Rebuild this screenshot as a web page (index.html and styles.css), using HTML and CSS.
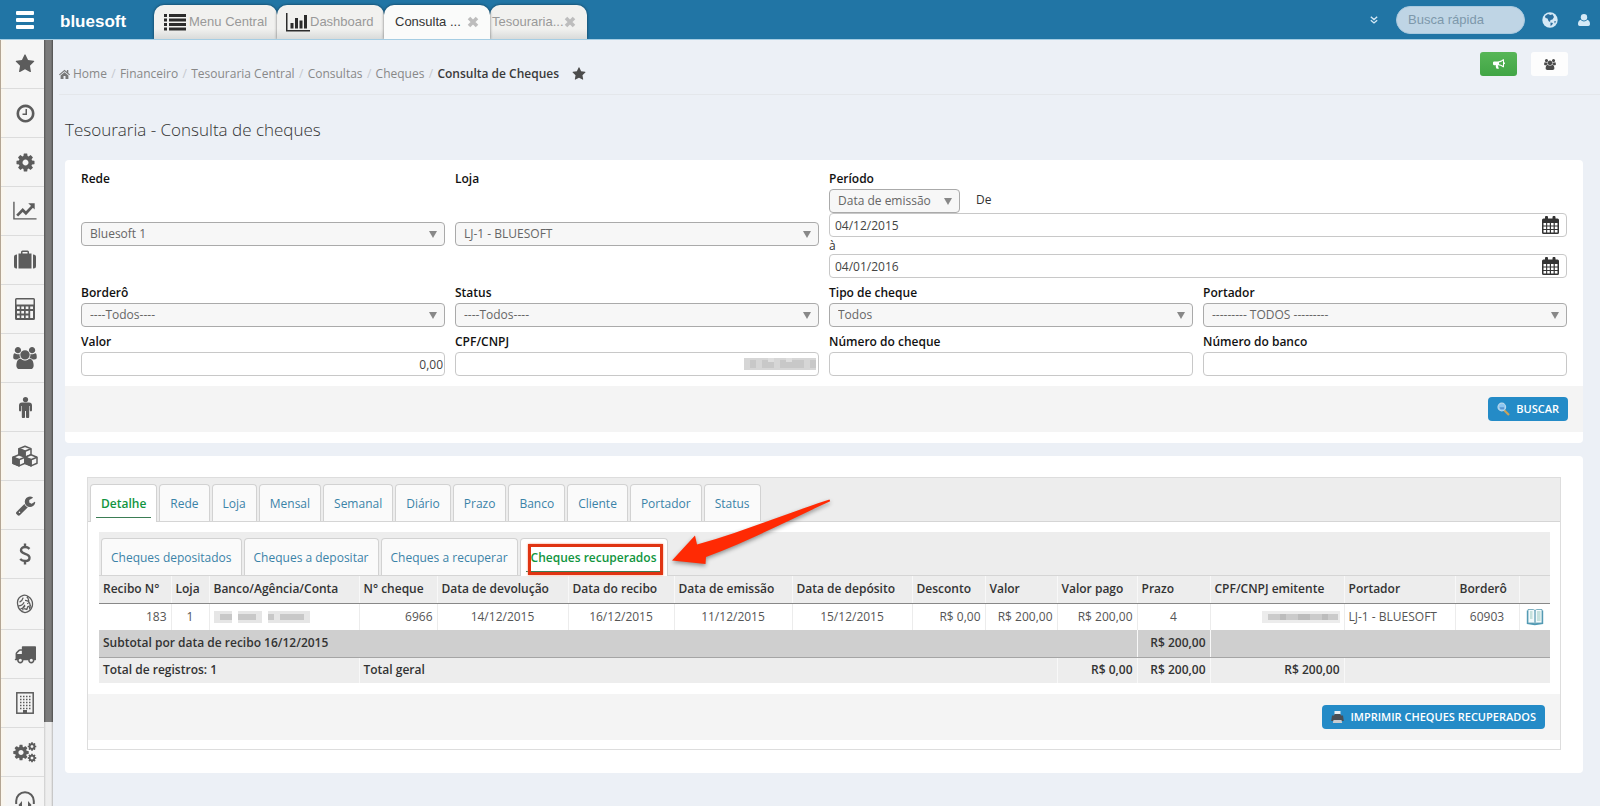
FILE: index.html
```html
<!DOCTYPE html>
<html lang="pt-BR">
<head>
<meta charset="utf-8">
<title>Tesouraria - Consulta de cheques</title>
<link rel="stylesheet" href="styles.css">
</head>
<body>
<svg class="sprite" aria-hidden="true">
  <symbol id="i-star" viewBox="0 0 1792 1792"><path d="M1728 647q0 22-26 48l-363 354 86 500q1 7 1 20 0 21-10.500 35.500t-30.500 14.500q-19 0-40-12l-449-236-449 236q-22 12-40 12-21 0-31.500-14.500t-10.500-35.500q0-6 2-20l86-500-364-354q-25-27-25-48 0-37 56-46l502-73 225-455q19-41 49-41t49 41l225 455 502 73q56 9 56 46z"/></symbol>
  <symbol id="i-clock" viewBox="0 0 1792 1792"><path d="M1024 544v448q0 14-9 23t-23 9h-320q-14 0-23-9t-9-23v-64q0-14 9-23t23-9h224v-352q0-14 9-23t23-9h64q14 0 23 9t9 23zm416 352q0-148-73-273t-198-198-273-73-273 73-198 198-73 273 73 273 198 198 273 73 273-73 198-198 73-273zm224 0q0 209-103 385.500t-279.500 279.500-385.500 103-385.500-103-279.500-279.500-103-385.500 103-385.500 279.500-279.500 385.500-103 385.500 103 279.500 279.500 103 385.500z"/></symbol>
  <symbol id="i-cog" viewBox="0 0 1792 1792"><path d="M1152 896q0-106-75-181t-181-75-181 75-75 181 75 181 181 75 181-75 75-181zm512-109v222q0 12-8 23t-20 13l-185 28q-19 54-39 91 35 50 107 138 10 12 10 25t-9 23q-27 37-99 108t-94 71q-12 0-26-9l-138-108q-44 23-91 38-16 136-29 186-7 28-36 28h-222q-14 0-24.500-8.500t-11.500-21.500l-28-184q-49-16-90-37l-141 107q-10 9-25 9-14 0-25-11-126-114-165-168-7-10-7-23 0-12 8-23 15-21 51-66.500t54-70.500q-27-50-41-99l-183-27q-13-2-21-12.500t-8-23.500v-222q0-12 8-23t19-13l186-28q14-46 39-92-40-57-107-138-10-12-10-24 0-10 9-23 26-36 98.500-107.500t94.500-71.500q13 0 26 10l138 107q44-23 91-38 16-136 29-186 7-28 36-28h222q14 0 24.500 8.500t11.500 21.500l28 184q49 16 90 37l142-107q9-9 24-9 13 0 25 10 129 119 165 170 7 8 7 22 0 12-8 23-15 21-51 66.500t-54 70.500q26 50 41 98l183 28q13 2 21 12.500t8 23.500z"/></symbol>
  <symbol id="i-chart" viewBox="0 0 26 20"><path d="M1 0v18.500h24.500" fill="none" stroke="currentColor" stroke-width="1.500"/><path d="M4.500 15l6-6 3.500 3.500 7-7.500" fill="none" stroke="currentColor" stroke-width="3"/><path d="M16.500 1.500h7v7z"/></symbol>
  <symbol id="i-case" viewBox="0 0 22 20"><path d="M2.500 4.500H3v14h-.5a2.500 2.500 0 0 1-2.500-2.500V7a2.500 2.500 0 0 1 2.500-2.500zM19 4.500h.5A2.500 2.500 0 0 1 22 7v9a2.500 2.500 0 0 1-2.500 2.500H19zM4.500 3.500H7V2a1.500 1.500 0 0 1 1.500-1.500h5A1.500 1.500 0 0 1 15 2v1.500h2.500v15h-13zM8.500 2v1.500h5V2z"/></symbol>
  <symbol id="i-calc" viewBox="0 0 20 22"><path fill-rule="evenodd" d="M1.500 0h17A1.500 1.500 0 0 1 20 1.500v19a1.500 1.500 0 0 1-1.500 1.500h-17A1.500 1.500 0 0 1 0 20.500v-19A1.500 1.500 0 0 1 1.500 0zM1.500 1.500v5h17v-5zM2 8.500v2.500h2.700V8.500zM6.300 8.500v2.500H9V8.500zM10.700 8.500v2.500h2.700V8.500zM15.200 8.500v2.500H18V8.500zM2 13v2.500h2.700V13zM6.300 13v2.500H9V13zM10.700 13v2.500h2.700V13zM15.200 13v7H18v-7zM2 17.500V20h2.700v-2.500zM6.300 17.500V20H9v-2.500zM10.700 17.500V20h2.700v-2.500z"/></symbol>
  <symbol id="i-users" viewBox="0 0 1920 1792"><path d="M593 896q-162 5-265 128h-134q-82 0-138-40.500t-56-118.500q0-353 124-353 6 0 43.500 21t97.500 42.500 119 21.500q67 0 133-23-5 37-5 66 0 139 81 256zm1071 637q0 120-73 189.500t-194 69.500h-874q-121 0-194-69.500t-73-189.500q0-53 3.500-103.500t14-109 26.500-108.500 43-97.500 62-81 85.500-53.500 111.500-20q10 0 43 21.500t73 48 107 48 135 21.500 135-21.500 107-48 73-48 43-21.500q61 0 111.500 20t85.500 53.500 62 81 43 97.500 26.500 108.500 14 109 3.500 103.500zm-1024-1277q0 106-75 181t-181 75-181-75-75-181 75-181 181-75 181 75 75 181zm704 384q0 159-112.500 271.500t-271.500 112.500-271.500-112.500-112.500-271.500 112.500-271.500 271.500-112.500 271.500 112.500 112.500 271.500zm576 225q0 78-56 118.500t-138 40.500h-134q-103-123-265-128 81-117 81-256 0-29-5-66 66 23 133 23 59 0 119-21.500t97.500-42.500 43.500-21q124 0 124 353zm-128-609q0 106-75 181t-181 75-181-75-75-181 75-181 181-75 181 75 75 181z"/></symbol>
  <symbol id="i-male" viewBox="0 0 14 21"><circle cx="7" cy="2.600" r="2.600"/><path d="M3.500 5.500h7A3 3 0 0 1 13.500 8.500v4.800a1.100 1.100 0 0 1-2.200 0V9h-.6v10.700a1.400 1.400 0 0 1-3.200 0V14h-1v5.700a1.400 1.400 0 0 1-3.200 0V9h-.6v4.300a1.100 1.100 0 0 1-2.200 0V8.500a3 3 0 0 1 3-3z"/></symbol>
  <symbol id="i-cubes" viewBox="0 0 26 21"><g id="cube" fill="#f5f5f5" stroke="currentColor" stroke-width="1.500" stroke-linejoin="round"><path d="M7 3.200l6-2.400 6 2.400v6l-6 2.700-6-2.700z"/><path d="M7 3.200l6 2.600 6-2.600M13 5.800v6"/><path d="M7 3.200l6 2.600v6.100l-6-2.700z" fill="currentColor"/></g><use href="#cube" x="-6" y="8.500"/><use href="#cube" x="6" y="8.500"/></symbol>
  <symbol id="i-wrench" viewBox="0 0 1792 1792"><path d="M448 1472q0-26-19-45t-45-19-45 19-19 45 19 45 45 19 45-19 19-45zm644-420l-682 682q-37 37-90 37-52 0-91-37l-106-108q-38-36-38-90 0-53 38-91l681-681q39 98 114.500 173.500t173.500 114.500zm634-435q0 39-23 106-47 134-164.500 217.500t-258.500 83.500q-185 0-316.500-131.500t-131.500-316.500 131.500-316.500 316.500-131.500q58 0 121.500 16.500t107.500 46.500q16 11 16 28t-16 28l-293 169v224l193 107q5-3 79-48.500t135.500-81 70.500-35.500q15 0 23.500 10t8.500 25z"/></symbol>
  <symbol id="i-dollar" viewBox="0 0 12 22"><path d="M10.500 5.800C9.300 4.600 7.800 4 6 4 3.700 4 2 5.300 2 7.200 2 11.800 10.500 9.800 10.500 14.700 10.500 16.800 8.700 18 6.200 18 4.200 18 2.400 17.300 1.200 16M6 .5V4M6 18v3.500" fill="none" stroke="currentColor" stroke-width="2.400"/></symbol>
  <symbol id="i-lion" viewBox="0 0 20 22"><path d="M8 1.500C3.500 3 1 7 2 12c.5 4 3.500 7.500 8 8.500 4-.5 7-3.500 8-7 .8-4-.5-8-4-10.500C12 1.500 10 1 8 1.500zM4 9c2-1 3.500-3 4-5M3 13c3 0 5-2 6-4M5 16c2 .5 4-1 5-3M12 3c2 2 2.500 4 2 6M10 7c2 0 4 1 5 3l1 3-3 1-1 3-3-1M8 18c-1-2 0-4 2-6" fill="none" stroke="currentColor" stroke-width="1.400"/><path d="M12 9.500l2.500 1-2 .8zM14 14.500l3-1-2 4z"/></symbol>
  <symbol id="i-truck" viewBox="0 0 1792 1792"><path d="M640 1408q0-52-38-90t-90-38-90 38-38 90 38 90 90 38 90-38 38-90zm-384-512h384v-256h-158q-13 0-22 9l-195 195q-9 9-9 22v30zm1280 512q0-52-38-90t-90-38-90 38-38 90 38 90 90 38 90-38 38-90zm256-1088v1024q0 15-4 26.500t-13.500 18.500-16.500 11.500-23.500 6-22.500 2-25.500 0-22.500-.5q0 106-75 181t-181 75-181-75-75-181h-384q0 106-75 181t-181 75-181-75-75-181h-64q-3 0-22.500.5t-25.500 0-22.500-2-23.500-6-16.500-11.500-13.500-18.500-4-26.500q0-26 19-45t45-19v-320q0-8-.5-35t0-38 2.500-34.500 6.500-37 14-30.500 22.500-30l198-198q19-19 50.500-32t58.500-13h160v-192q0-26 19-45t45-19h1024q26 0 45 19t19 45z"/></symbol>
  <symbol id="i-building" viewBox="0 0 18 22"><rect x=".8" y=".8" width="16.400" height="20.400" fill="none" stroke="currentColor" stroke-width="1.500"/><path d="M4 4.500h11M4 7.500h11M4 10.500h11M4 13.500h11M4 16.500h11" stroke="currentColor" stroke-width="1.500" stroke-dasharray="1.500 1.500"/><path d="M7 18h4v3.500H7z"/></symbol>
  <symbol id="i-cogs" viewBox="0 0 24 21"><use href="#i-cog" x="-1" y="2" width="18" height="18"/><use href="#i-cog" x="14" y="0" width="10" height="10"/><use href="#i-cog" x="14" y="11.500" width="10" height="10"/></symbol>
  <symbol id="i-head" viewBox="0 0 20 20"><path d="M1.200 13V10a8.800 8.800 0 0 1 17.600 0v3" fill="none" stroke="currentColor" stroke-width="2"/><path d="M3.500 14l3.500-4v9zM16.500 14L13 10v9z"/></symbol>
  <symbol id="i-cal" viewBox="0 0 17 18"><path fill-rule="evenodd" d="M1.500 2.500H3V1.300a1.300 1.300 0 0 1 3 0v1.200h4.500V1.300a1.300 1.300 0 0 1 3 0v1.200h2A1.500 1.500 0 0 1 17 4v12.500a1.500 1.500 0 0 1-1.500 1.500h-14A1.500 1.500 0 0 1 0 16.500V4a1.500 1.500 0 0 1 1.500-1.500zM1.500 7v2.500h2.600V7zM5.200 7v2.500h2.600V7zM9 7v2.500h2.600V7zM12.800 7v2.500h2.700V7zM1.500 10.500V13h2.600v-2.500zM5.200 10.500V13h2.600v-2.500zM9 10.500V13h2.600v-2.500zM12.800 10.500V13h2.700v-2.500zM1.500 14v2.500h2.600V14zM5.200 14v2.500h2.600V14zM9 14v2.500h2.600V14zM12.800 14v2.500h2.700V14z"/></symbol>
  <symbol id="i-x" viewBox="0 0 12 12"><path d="M2 2l8 8M10 2l-8 8" stroke="currentColor" stroke-width="3.600"/></symbol>
</svg>

<header class="topbar">
  <button class="burger" aria-label="Menu"><span></span><span></span><span></span></button>
  <a class="logo" href="#">bluesoft</a>
  <nav class="wtabs">
    <a class="wtab wtab-menu" href="#"><svg class="ic-list" viewBox="0 0 22 18"><path d="M0 1h3v3H0zM5 1h17v3H5zM0 5.500h3v3H0zM5 5.500h17v3H5zM0 10h3v3H0zM5 10h17v3H5zM0 14.500h3v3H0zM5 14.500h17v3H5z"/></svg>Menu Central</a>
    <a class="wtab wtab-dash" href="#"><svg class="ic-bars" viewBox="0 0 24 19"><path d="M0 0h1.500v17H24v1.500H0zM4.500 10h3v5.500h-3zM9 5h3v10.500H9zM13.500 7.500h3v8h-3zM18 2h3v13.500h-3z"/></svg>Dashboard</a>
    <a class="wtab wtab-on" href="#">Consulta ...<svg class="ic-x"><use href="#i-x"/></svg></a>
    <a class="wtab wtab-last" href="#">Tesouraria...<svg class="ic-x"><use href="#i-x"/></svg></a>
  </nav>
  <div class="tools">
    <svg class="ic-down" viewBox="0 0 8 8"><path d="M.8.8L4 3.600 7.200.8M.8 4.200L4 7l3.200-2.800" fill="none" stroke="currentColor" stroke-width="1.300"/></svg>
    <input class="search" type="text" placeholder="Busca rápida" aria-label="Busca rápida">
    <svg class="ic-globe" viewBox="0 0 16 16"><circle cx="8" cy="8" r="7.700"/><path d="M3 4l3-2 2.500 1 2-.8L12 5l-1.500 2.500L8.500 8 8 10 6.500 9 5.500 6.500 3.500 6zM8.500 10.500l2.500.5-1 2-1.500 1zM12 9.500l2-.5-1 2.500z" fill="#2b6f9f"/></svg>
    <svg class="ic-user" viewBox="0 0 12 12"><circle cx="6" cy="3.200" r="3.200"/><path d="M2.600 5.800a4.300 4.300 0 0 0 6.800 0C11.400 6.300 12 8.500 12 10.300A1.700 1.700 0 0 1 10.300 12H1.700A1.700 1.700 0 0 1 0 10.300c0-1.800.6-4 2.600-4.500z"/></svg>
  </div>
</header>

<div class="shell">
  <nav class="side" aria-label="Módulos">
    <a href="#"><svg class="s20"><use href="#i-star"/></svg></a>
    <a href="#"><svg class="s21"><use href="#i-clock"/></svg></a>
    <a href="#"><svg class="s21"><use href="#i-cog"/></svg></a>
    <a href="#"><svg class="s24"><use href="#i-chart"/></svg></a>
    <a href="#"><svg class="s22"><use href="#i-case"/></svg></a>
    <a href="#"><svg class="s22"><use href="#i-calc"/></svg></a>
    <a href="#"><svg class="s24"><use href="#i-users"/></svg></a>
    <a href="#"><svg class="s21"><use href="#i-male"/></svg></a>
    <a href="#"><svg class="s26"><use href="#i-cubes"/></svg></a>
    <a href="#"><svg class="s21"><use href="#i-wrench"/></svg></a>
    <a href="#"><svg class="s22"><use href="#i-dollar"/></svg></a>
    <a class="tall" href="#"><svg class="s20"><use href="#i-lion"/></svg></a>
    <a href="#"><svg class="s22"><use href="#i-truck"/></svg></a>
    <a href="#"><svg class="s22"><use href="#i-building"/></svg></a>
    <a href="#"><svg class="s24"><use href="#i-cogs"/></svg></a>
    <a href="#"><svg class="s20"><use href="#i-head"/></svg></a>
  </nav>
  <div class="track"><div class="thumb"></div></div>

  <main class="main">
    <div class="crumbs">
      <nav class="trail">
        <a href="#"><svg class="ic-home" viewBox="0 0 11 10"><path d="M5.500.8L0 5.400l.7.8 4.800-4 4.800 4 .7-.8-1.700-1.500V1H7.900v1.700zM5.500 3.200L1.600 6.400V10h2.900V7h2v3h2.900V6.400z"/></svg>Home</a><i>/</i><a href="#">Financeiro</a><i>/</i><a href="#">Tesouraria Central</a><i>/</i><a href="#">Consultas</a><i>/</i><a href="#">Cheques</a><i>/</i><b>Consulta de Cheques</b><svg class="ic-fav"><use href="#i-star"/></svg>
      </nav>
      <div class="acts">
        <button class="act act-green" aria-label="Avisos"><svg class="ic-horn" viewBox="0 0 12 10"><path fill-rule="evenodd" d="M10 .3h1v3a1 1 0 0 1 0 2v3h-1C8.500 7 6.800 6.300 5 6.200c-.4.6 0 1.200.5 1.600-.4.5 0 1 .5 1.400-.5.800-2 .8-2.600.2C3 8.400 2.500 7.400 3 6.200H1.200A1.200 1.200 0 0 1 0 5V3.600a1.200 1.200 0 0 1 1.200-1.200H4.500C6.500 2.400 8.500 1.600 10 .3zM10 1.700C8.600 2.700 7.300 3.200 6 3.400v1.800c1.300.1 2.600.6 4 1.600z"/></svg></button>
        <button class="act act-white" aria-label="Usuários"><svg class="ic-grp"><use href="#i-users"/></svg></button>
      </div>
    </div>
    <h1 class="title">Tesouraria - Consulta de cheques</h1>

    <form class="panel search-panel">
      <div class="fields">
        <div class="field"><label for="rede">Rede</label><div class="mid"><span class="sel"><select id="rede"><option>Bluesoft 1</option></select></span></div></div>
        <div class="field"><label for="loja">Loja</label><div class="mid"><span class="sel"><select id="loja"><option>LJ-1 - BLUESOFT</option></select></span></div></div>
        <div class="field span2"><label for="periodo">Período</label>
          <div class="period"><span class="sel sel-short"><select id="periodo"><option>Data de emissão</option></select></span><label class="de" for="de">De</label></div>
          <div class="date"><input id="de" type="text" value="04/12/2015"><button type="button" aria-label="Calendário"><svg><use href="#i-cal"/></svg></button></div>
          <label class="ate" for="ate">à</label>
          <div class="date"><input id="ate" type="text" value="04/01/2016"><button type="button" aria-label="Calendário"><svg><use href="#i-cal"/></svg></button></div>
        </div>
        <div class="field"><label for="bordero">Borderô</label><span class="sel"><select id="bordero"><option>----Todos----</option></select></span></div>
        <div class="field"><label for="status">Status</label><span class="sel"><select id="status"><option>----Todos----</option></select></span></div>
        <div class="field"><label for="tipo">Tipo de cheque</label><span class="sel"><select id="tipo"><option>Todos</option></select></span></div>
        <div class="field"><label for="portador">Portador</label><span class="sel"><select id="portador"><option>--------- TODOS ---------</option></select></span></div>
        <div class="field"><label for="valor">Valor</label><input class="num" id="valor" type="text" value="0,00"></div>
        <div class="field"><label for="cpf">CPF/CNPJ</label><div class="masked"><input id="cpf" type="text"><svg class="mask-cpf" viewBox="0 0 72 12"><g fill="#d6d6d6"><path d="M0 0h72v12H0z"/><path fill="#c8c8c8" d="M6 2h6v8H6zM18 2h12v8H18zM36 2h24v8H36zM66 2h6v8h-6z"/><path fill="#dedede" d="M24 0h6v4h-6zM42 0h6v4h-6z"/></g></svg></div></div>
        <div class="field"><label for="ncheque">Número do cheque</label><input id="ncheque" type="text"></div>
        <div class="field"><label for="nbanco">Número do banco</label><input id="nbanco" type="text"></div>
      </div>
      <div class="foot">
        <button type="button" class="btn"><svg class="ic-b" viewBox="0 0 13 14"><path d="M7 8l5 5" stroke="#c9a25b" stroke-width="2.200"/><circle cx="4.800" cy="5" r="3.800" fill="#8cc6f2" stroke="#b7d6ea" stroke-width="1.200"/><path d="M2.500 5.200h4.600v2H3.500z" fill="#5a94d0"/></svg>BUSCAR</button>
      </div>
    </form>

    <section class="panel result-panel">
      <div class="box">
        <nav class="tabs tabs-top">
          <a class="tab on" href="#"><span>Detalhe</span></a><a class="tab" href="#">Rede</a><a class="tab" href="#">Loja</a><a class="tab" href="#">Mensal</a><a class="tab" href="#">Semanal</a><a class="tab" href="#">Diário</a><a class="tab" href="#">Prazo</a><a class="tab" href="#">Banco</a><a class="tab" href="#">Cliente</a><a class="tab" href="#">Portador</a><a class="tab" href="#">Status</a>
        </nav>
        <div class="inner">
          <nav class="tabs tabs-sub">
            <a class="tab" href="#">Cheques depositados</a><a class="tab" href="#">Cheques a depositar</a><a class="tab" href="#">Cheques a recuperar</a><a class="tab on marked" href="#"><span>Cheques recuperados</span><em class="frame"></em><svg class="arrow" viewBox="0 0 164 70"><path d="M0 61.500L23 36.500l2 9C70 33 110 16 157.500 0.500l.7 1.800C115 22 75 43 34 58l-.5 7z" fill="#ff2a04"/></svg></a>
          </nav>
          <table class="grid">
            <colgroup><col class="w72"><col class="w38"><col class="w150"><col class="w78"><col class="w131"><col class="w106"><col class="w118"><col class="w120"><col class="w73"><col class="w72"><col class="w80"><col class="w73"><col class="w134"><col class="w111"><col class="w64"><col class="w31"></colgroup>
            <thead><tr><th>Recibo N°</th><th>Loja</th><th>Banco/Agência/Conta</th><th>N° cheque</th><th>Data de devolução</th><th>Data do recibo</th><th>Data de emissão</th><th>Data de depósito</th><th>Desconto</th><th>Valor</th><th>Valor pago</th><th>Prazo</th><th>CPF/CNPJ emitente</th><th>Portador</th><th>Borderô</th><th></th></tr></thead>
            <tbody>
              <tr class="row"><td class="r">183</td><td class="c">1</td><td><svg class="mask-acc" viewBox="0 0 96 12"><g fill="#e6e6e6"><path d="M0 0h18v12H0zM24 0h24v12H24zM54 0h42v12H54z"/><path fill="#c8c8c8" d="M6 3h12v6H6zM24 3h18v6H24zM54 3h6v6h-6zM66 3h24v6H66z"/></g></svg></td><td class="r">6966</td><td class="c">14/12/2015</td><td class="c">16/12/2015</td><td class="c">11/12/2015</td><td class="c">15/12/2015</td><td class="r">R$ 0,00</td><td class="r">R$ 200,00</td><td class="r">R$ 200,00</td><td class="c">4</td><td class="r"><svg class="mask-doc" viewBox="0 0 78 12"><g fill="#ececec"><path d="M0 0h78v12H0z"/><path fill="#cbcbcb" d="M6 3h70v6H6z"/><path fill="#bcbcbc" d="M18 3h6v6h-6zM36 3h12v6H36zM60 3h6v6h-6z"/></g></svg></td><td>LJ-1 - BLUESOFT</td><td class="c">60903</td><td class="c"><a href="#" aria-label="Abrir"><svg class="ic-book" viewBox="0 0 18 18"><path d="M.8 2.500v13.500l8 1.200 8.400-1.200V2.500z" fill="#4f9ab5"/><path d="M2 1.500h5.500L9 2.500v13.500L7.500 15H2zM9 2.500l1.500-1H16V15h-5.500L9 16z" fill="#f2fafc" stroke="#5d9db3" stroke-width=".8"/><path d="M4 4h2.500M4 6h2.500M4 8h2.500M4 10h2.500M11 4h3.500M11 6h3.500M11 8h3.500M11 10h3.500M11 12h3.500" stroke="#8fc4b8" stroke-width=".9"/></svg></a></td></tr>
              <tr class="sub"><td colspan="11">Subtotal por data de recibo 16/12/2015</td><td class="r">R$ 200,00</td><td colspan="4"></td></tr>
            </tbody>
            <tfoot><tr><td colspan="3">Total de registros: 1</td><td colspan="7">Total geral</td><td class="r">R$ 0,00</td><td class="r">R$ 200,00</td><td class="r">R$ 200,00</td><td colspan="3"></td></tr></tfoot>
          </table>
        </div>
        <div class="foot">
          <button type="button" class="btn"><svg class="ic-b" viewBox="0 0 13 14"><path d="M3.500 1h6v5h-6z" fill="#e8eef2"/><path d="M1 5.500h2L3.500 4h6l.5 1.500h2l.8 5.500H.2z" fill="#4a4f55"/><path d="M2.500 10h8l.7 3H1.800z" fill="#c9ccd0"/></svg>IMPRIMIR CHEQUES RECUPERADOS</button>
        </div>
      </div>
    </section>
  </main>
</div>
</body>
</html>
```
FILE: styles.css
```css
* { box-sizing: border-box; }
html, body { height: 100%; }
body {
  margin: 0;
  display: flex;
  flex-direction: column;
  overflow: hidden;
  background: #ecf0f6;
  color: #333;
  font: 12px/18px "Open Sans", "Noto Sans", sans-serif;
}
svg { fill: currentColor; display: block; flex: none; overflow: visible; }
.sprite { position: absolute; width: 0; height: 0; }
a { color: inherit; text-decoration: none; }
button { font: inherit; border: 0; padding: 0; cursor: pointer; }

/* Top bar */
.topbar {
  flex: none;
  display: flex;
  align-items: flex-end;
  height: 40px;
  padding-right: 10px;
  background: #2175a5;
  border-bottom: 1px solid #a5cde3;
}
.burger {
  align-self: center;
  display: flex;
  flex-direction: column;
  gap: 3px;
  width: 18px;
  margin: 0 26px 0 16px;
  background: none;
}
.burger span { height: 4px; border-radius: 1px; background: #fff; }
.logo {
  width: 90px;
  color: #fff;
  font: bold 17px/34px "Liberation Sans", Arial, sans-serif;
}
.wtabs { display: flex; margin-left: 4px; font: 13px/32px "Liberation Sans", Arial, sans-serif; color: #999; }
.wtab {
  display: flex;
  align-items: center;
  height: 34px;
  border-radius: 10px 10px 0 0;
  background: linear-gradient(#f1f1ef 70%, #d9dbda);
  box-shadow: 0 0 3px rgba(0, 0, 0, .55);
  clip-path: inset(-4px -4px 0 -4px);
}
.wtab-menu { width: 123px; padding-left: 10px; gap: 3px; }
.wtab-dash { width: 107px; padding-left: 9px; }
.wtab-on { width: 106px; padding: 0 11px; justify-content: space-between; background: #fafbfa; color: #333; z-index: 1; }
.wtab-last { width: 97px; padding: 0 12px 0 2px; justify-content: space-between; }
.ic-list { width: 22px; height: 18px; color: #2c2c2c; }
.ic-bars { width: 24px; height: 19px; color: #2c2c2c; }
.ic-x { width: 12px; height: 12px; color: #bdbdbd; }
.tools { display: flex; align-items: center; margin-left: auto; height: 39px; color: #d5e9f6; }
.ic-down { width: 8px; height: 8px; margin-right: 18px; }
.search {
  width: 129px;
  height: 28px;
  padding: 0 11px;
  border: 1px solid #a9c9de;
  border-radius: 14px;
  background: #bfd5e5;
  font: 13px "Liberation Sans", Arial, sans-serif;
}
.search::placeholder { color: #7d98ab; }
.ic-globe { width: 16px; height: 16px; margin-left: 17px; }
.ic-user { width: 12px; height: 12px; margin-left: 20px; }

/* Shell */
.shell { flex: 1; display: flex; min-height: 0; }
.side {
  flex: none;
  width: 44px;
  border-left: 1px solid #b3a594;
  background: linear-gradient(90deg, #fbf6ec, #f5f5f5 6px);
  overflow: hidden;
  color: #5c5c5c;
}
.side a {
  display: flex;
  align-items: center;
  justify-content: center;
  height: 49px;
  padding-left: 5px;
  border-bottom: 1px solid #dcdcdc;
}
.side .tall { height: 51px; }
.s20 { width: 20px; height: 20px; }
.s21 { width: 21px; height: 21px; }
.s22 { width: 22px; height: 22px; }
.s24 { width: 24px; height: 22px; }
.s26 { width: 26px; height: 22px; }
.track { flex: none; width: 9px; background: linear-gradient(90deg, #ccc, #eee 2px, #eee 7px, #bbb); }
.thumb { height: 89%; background: linear-gradient(90deg, #555, #7b7b7b 2px, #7b7b7b 7px, #4d4d4d); }
.main { flex: 1; min-width: 0; padding: 0 17px 0 12px; }

/* Breadcrumb */
.crumbs {
  display: flex;
  justify-content: space-between;
  height: 55px;
  margin: 0 -17px 0 -6px;
  padding-right: 32px;
  border-bottom: 1px solid #e4e7eb;
}
.trail { display: flex; align-items: center; color: #888; padding-top: 13px; }
.trail a { display: flex; align-items: center; gap: 3px; }
.trail i { width: 13px; text-align: center; font-style: normal; color: #c6c9cf; }
.trail b { font-weight: 600; color: #3a3a3a; }
.ic-home { width: 11px; height: 10px; color: #777; }
.ic-fav { width: 14px; height: 14px; margin-left: 13px; color: #4c4c4c; }
.acts { display: flex; gap: 14px; padding-top: 12px; }
.act { display: flex; align-items: center; justify-content: center; width: 37px; height: 24px; border-radius: 3px; }
.act-green { background: linear-gradient(#57b657, #41a545); color: #fff; }
.act-white { background: #fdfdfd; color: #4a4a4a; }
.ic-horn { width: 12px; height: 10px; }
.ic-grp { width: 12px; height: 11px; }
.title { margin: 19px 0 14px 0; font-size: 17px; line-height: 32px; font-weight: 300; color: #333; }

/* Panels */
.panel { background: #fff; border-radius: 4px; }
.search-panel { padding: 10px 0 11px; }
.fields { display: grid; grid-template-columns: repeat(4, minmax(0, 1fr)); gap: 6px 10px; padding: 0 16px 10px; }
.field { display: flex; flex-direction: column; min-width: 0; }
.span2 { grid-column: span 2; }
.field > label { margin-bottom: 1px; color: #111; font-weight: 600; }
.mid { flex: 1; display: flex; align-items: center; }
.field input, .sel select {
  display: block;
  width: 100%;
  height: 24px;
  border: 1px solid #c8c8c8;
  border-radius: 4px;
  background: #fff;
  color: #444;
  font: inherit;
}
.field input { padding: 0 5px; }
.field .num { text-align: right; padding-right: 1px; }
.sel { display: block; position: relative; width: 100%; }
.sel select { appearance: none; padding: 0 8px; border-color: #aaa; background: #f7f7f7; color: #666; }
.sel::after {
  content: "";
  position: absolute;
  right: 8px;
  top: 9px;
  border: 4px solid transparent;
  border-top: 7px solid #888;
  border-bottom: 0;
  pointer-events: none;
}
.period { display: flex; }
.sel-short { width: 131px; }
.de { margin-left: 16px; line-height: 22px; }
.field > .ate { margin: 0; line-height: 17px; font-weight: 400; color: #333; }
.date, .masked { position: relative; }
.date button { position: absolute; right: 8px; top: 3px; background: none; color: #333; }
.date svg { width: 17px; height: 18px; }
.mask-cpf { position: absolute; right: 3px; top: 6px; width: 72px; height: 12px; }
.foot { display: flex; align-items: center; justify-content: flex-end; height: 46px; padding: 0 15px; background: #f4f4f4; }
.btn {
  display: flex;
  align-items: center;
  gap: 6px;
  height: 24px;
  padding: 0 9px;
  border-radius: 4px;
  background: #248bc7;
  color: #fff;
  font-size: 11px;
  font-weight: 600;
}
.ic-b { width: 13px; height: 14px; }

/* Results */
.result-panel { margin-top: 13px; padding: 21px 22px 23px; }
.box { border: 1px solid #ddd; padding-bottom: 9px; }
.tabs { display: flex; gap: 2px; height: 44px; padding: 6px 2px 0; background: #ededed; border-bottom: 1px solid #d5d5d5; }
.tab {
  position: relative;
  height: 37px;
  padding: 0 10px;
  border: 1px solid #d2d2d2;
  border-bottom: 0;
  border-radius: 4px 4px 0 0;
  background: #fafafa;
  color: #3a83a8;
  line-height: 38px;
  white-space: nowrap;
}
.tabs-sub .tab { padding: 0 9px; }
.tabs .on { height: 38px; padding: 0 5px; background: #fff; color: #119540; font-weight: 600; }
.on span { display: block; height: 33px; padding: 0 5px; border-bottom: 1px solid #3b7d55; }
.inner { padding: 10px 10px 11px 11px; }
.frame { position: absolute; inset: 5px 4px 1px 7px; border: 3px solid #e03412; box-shadow: 0 0 2px #f98c6c; }
.arrow { position: absolute; left: calc(100% + 5px); top: -40px; width: 164px; height: 70px; filter: drop-shadow(0 2px 2px rgba(0, 0, 0, .4)); z-index: 2; }
.grid { width: 100%; table-layout: fixed; border-collapse: collapse; }
.w72 { width: 72px; } .w38 { width: 38px; } .w150 { width: 150px; } .w78 { width: 78px; }
.w131 { width: 131px; } .w106 { width: 106px; } .w118 { width: 118px; } .w120 { width: 120px; }
.w73 { width: 73px; } .w80 { width: 80px; } .w134 { width: 134px; } .w111 { width: 111px; }
.w64 { width: 64px; } .w31 { width: 31px; }
.grid th, .grid td { height: 27px; padding: 0 4px; border-right: 1px solid #f8f8f8; text-align: left; font-weight: 600; white-space: nowrap; }
.grid th { background: #ededed; border-bottom: 1px solid #888; }
.grid .row td { border-right-color: #ececec; font-weight: 400; color: #555; }
.grid .sub td { background: #cfcfcf; border-bottom: 1px solid #a5a5a5; }
.grid tfoot td { height: 26px; background: #ededed; }
.grid th:last-child, .grid td:last-child, .grid .row td:last-child { border-right: 0; }
.grid .r { text-align: right; }
.grid .c { text-align: center; }
.mask-acc { width: 96px; height: 12px; }
.mask-doc { width: 78px; height: 12px; margin-left: auto; }
.ic-book { width: 18px; height: 18px; margin: auto; }
```
